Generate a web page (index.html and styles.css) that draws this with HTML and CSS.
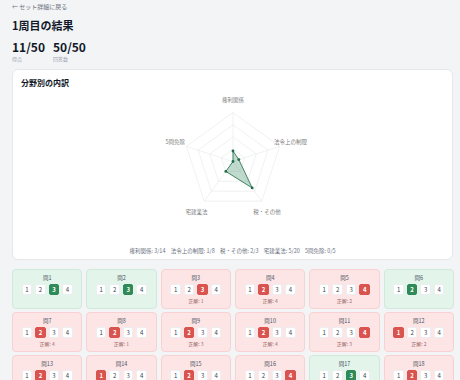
FILE: index.html
```html
<!DOCTYPE html>
<html lang="ja">
<head>
  <meta charset="UTF-8" />
  <meta name="viewport" content="width=device-width, initial-scale=1" />
  <title>1周目の結果</title>
  <link rel="stylesheet" href="styles.css">
</head>
<body>

  <a class="back" href="#">← セット詳細に戻る</a>
  <h1 class="title">1周目の結果</h1>

  <div class="scores">
    <div class="score">
      <div class="score-value">11/50</div>
      <div class="score-label">得点</div>
    </div>
    <div class="score">
      <div class="score-value">50/50</div>
      <div class="score-label">回答数</div>
    </div>
  </div>

  <div class="card">
    <h2 class="card-title">分野別の内訳</h2>
    <svg class="radar" width="200" height="150" viewBox="0 0 200 150">
      <g class="grid">
        <polygon points="100,19.5 146.6,53.36 128.8,108.14 71.2,108.14 53.4,53.36" />
        <polygon points="100,31.75 134.95,57.14 121.6,98.23 78.4,98.23 65.05,57.14" />
        <polygon points="100,44 123.3,60.93 114.4,88.32 85.6,88.32 76.7,60.93" />
        <polygon points="100,56.25 111.65,64.71 107.2,78.41 92.8,78.41 88.35,64.71" />
        <line x1="100" y1="68.5" x2="100" y2="19.5" />
        <line x1="100" y1="68.5" x2="146.6" y2="53.36" />
        <line x1="100" y1="68.5" x2="128.8" y2="108.14" />
        <line x1="100" y1="68.5" x2="71.2" y2="108.14" />
        <line x1="100" y1="68.5" x2="53.4" y2="53.36" />
      </g>
      <polygon class="area" points="100,58 105.83,66.61 119.2,94.93 92.8,78.41 100,68.5" />
      <g class="dots">
        <circle cx="100" cy="58" r="1.4" />
        <circle cx="105.83" cy="66.61" r="1.4" />
        <circle cx="119.2" cy="94.93" r="1.4" />
        <circle cx="92.8" cy="78.41" r="1.4" />
        <circle cx="100" cy="68.5" r="1.4" />
      </g>
      <g class="labels">
        <text x="100" y="9" text-anchor="middle">権利関係</text>
        <text x="141" y="51" text-anchor="start">法令上の制限</text>
        <text x="134" y="121" text-anchor="middle">税・その他</text>
        <text x="63.5" y="121" text-anchor="middle">宅建業法</text>
        <text x="52" y="51" text-anchor="end">5問免除</text>
      </g>
    </svg>
    <p class="summary">
      <span>権利関係: 3/14</span>
      <span>法令上の制限: 1/8</span>
      <span>税・その他: 2/3</span>
      <span>宅建業法: 5/20</span>
      <span>5問免除: 0/5</span>
    </p>
  </div>

  <div class="questions" id="questions"></div>

  <script>
    const answers = [
      [3, 3], [3, 3], [3, 1], [2, 4], [4, 2], [2, 2],
      [2, 4], [2, 1], [2, 3], [2, 4], [4, 3], [1, 2],
      [2, 4], [1, 3], [2, 4], [4, 1], [3, 3], [2, 1]
    ];

    const list = document.getElementById('questions');

    answers.forEach(([picked, correct], i) => {
      const ok = picked === correct;
      const cell = document.createElement('div');
      cell.className = 'question ' + (ok ? 'ok' : 'ng');

      let html = '<div class="q-label">問' + (i + 1) + '</div><div class="choices">';
      for (let n = 1; n <= 4; n++) {
        const cls = n === picked ? 'choice picked' : 'choice';
        html += '<span class="' + cls + '">' + n + '</span>';
      }
      html += '</div>';
      if (!ok) {
        html += '<div class="correct">正解: ' + correct + '</div>';
      }
      cell.innerHTML = html;
      list.appendChild(cell);
    });
  </script>

</body>
</html>
```

FILE: styles.css
```css
* {
  box-sizing: border-box;
  margin: 0;
  padding: 0;
}

body {
  background-color: #f3f4f6;
  padding: 3px 6px 20px 12px;
  font-family: 'Noto Sans CJK JP', 'Noto Sans', sans-serif;
  color: #111827;
}

.back {
  display: block;
  font-size: 6px;
  line-height: 8px;
  color: #6b7280;
  text-decoration: none;
}

.title {
  margin-top: 7px;
  font-size: 11px;
  line-height: 14px;
  font-weight: 700;
}

.scores {
  display: flex;
  gap: 8px;
  margin-top: 8px;
}

.score-value {
  font-size: 12px;
  line-height: 14px;
  font-weight: 700;
}

.score-label {
  margin-top: 1px;
  font-size: 5px;
  line-height: 7px;
  color: #9ca3af;
}

.card {
  margin-top: 7px;
  width: 441px;
  background: #fff;
  border: 1px solid #e5e7eb;
  border-radius: 6px;
  padding: 8px 8px 4px;
}

.card-title {
  font-size: 8px;
  line-height: 10px;
  font-weight: 700;
}

.radar {
  display: block;
  margin: 5px auto 0;
}

.grid polygon,
.grid line {
  fill: none;
  stroke: #e5e7eb;
  stroke-width: 0.6;
}

.area {
  fill: rgba(47, 133, 90, 0.3);
  stroke: #2f7a55;
  stroke-width: 0.9;
  stroke-linejoin: round;
}

.dots circle {
  fill: #1f6b47;
}

.labels text {
  font-size: 5.5px;
  fill: #808080;
}

.summary {
  margin-top: 4px;
  text-align: center;
  font-size: 5.5px;
  line-height: 8px;
  color: #6b7280;
}

.summary span {
  margin: 0 2px;
}

.questions {
  margin-top: 9px;
  width: 442px;
  display: grid;
  grid-template-columns: repeat(6, 1fr);
  gap: 3px 4px;
}

.question {
  height: 40px;
  border-radius: 4px;
  padding-top: 4px;
  display: flex;
  flex-direction: column;
  align-items: center;
}

.question.ok {
  background-color: #e3f4ea;
  border: 1px solid #cfeadb;
}

.question.ng {
  background-color: #fde5e5;
  border: 1px solid #f8d2d2;
}

.q-label {
  font-size: 5.5px;
  line-height: 8px;
  color: #4b5563;
}

.choices {
  display: flex;
  gap: 3px;
  margin-top: 2px;
}

.choice {
  width: 10.5px;
  height: 11px;
  display: flex;
  justify-content: center;
  align-items: center;
  font-size: 6px;
  background: #fff;
  border: 1px solid #eceef1;
  border-radius: 2px;
  color: #374151;
}

.ok .choice.picked {
  background-color: #2f8a57;
  border-color: #2f8a57;
  color: #fff;
  font-weight: 700;
}

.ng .choice.picked {
  background-color: #d9534f;
  border-color: #d9534f;
  color: #fff;
  font-weight: 700;
}

.correct {
  margin-top: 2px;
  font-size: 5px;
  line-height: 8px;
  color: #9a6b6b;
}
```
